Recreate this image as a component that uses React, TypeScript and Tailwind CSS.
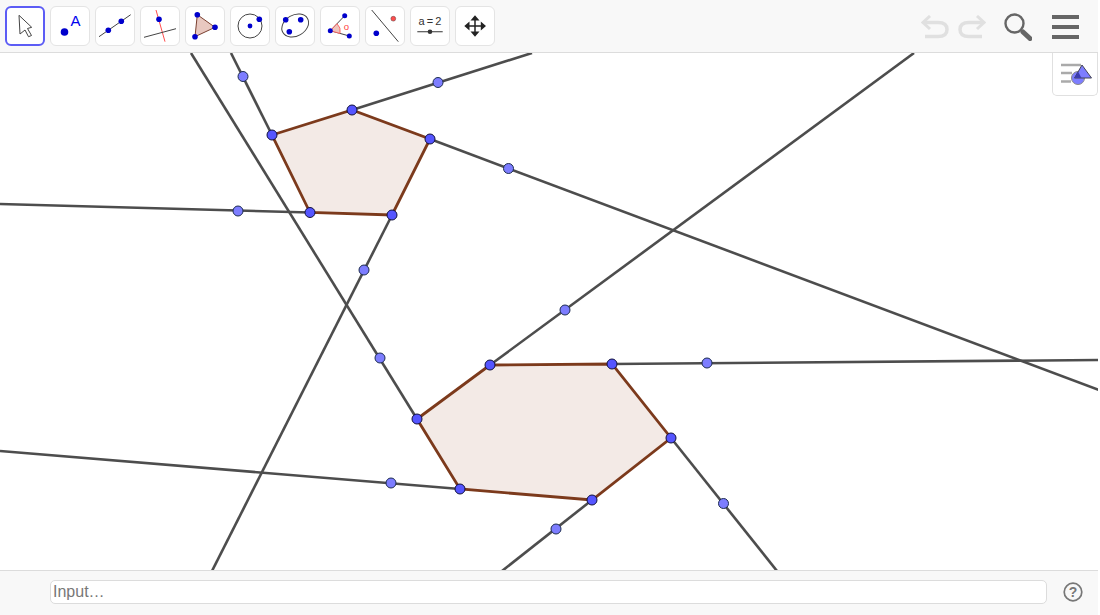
const FONT = "font-['Liberation_Sans',Arial,sans-serif]"

const lines = [
  'M191 53 L417 419',
  'M231 53 L272 135',
  'M352 110 L532 53',
  'M430 139 L1099 390',
  'M0 204 L310 212.5',
  'M392 215 L212 571',
  'M490 365 L914 53',
  'M612 364 L1099 360',
  'M671 438 L777 571',
  'M592 500 L502 571',
  'M0 451 L460 489',
]

const polygons = [
  '272,135 352,110 430,139 392,215 310,212.5',
  '417,419 490,365 612,364 671,438 592,500 460,489',
]

const vertices = [
  [272, 135], [352, 110], [430, 139], [392, 215], [310, 212.5],
  [417, 419], [490, 365], [612, 364], [671, 438], [592, 500], [460, 489],
]

const linePoints = [
  [243, 76.5], [438, 82.5], [508.5, 168.5], [238, 211], [364, 270], [380, 358],
  [565, 310], [707, 363], [723.5, 503.5], [556, 529], [391, 483],
]

function Tool({ active, children }: { active?: boolean; children: React.ReactNode }) {
  return (
    <div
      className={
        active
          ? 'h-10 w-10 rounded-[6px] border-2 border-[#5c5cf5] bg-white'
          : 'h-10 w-10 rounded-[6px] border border-[#e4e4e4] bg-white'
      }
    >
      {active ? (
        <svg viewBox="0 0 36 36" className="h-9 w-9">
          {children}
        </svg>
      ) : (
        <svg viewBox="0 0 38 38" className="h-[38px] w-[38px]">
          {children}
        </svg>
      )}
    </div>
  )
}

const Dot = ({ x, y, r = 2.8, fill = '#0000cc' }: { x: number; y: number; r?: number; fill?: string }) => (
  <circle cx={x} cy={y} r={r} fill={fill} />
)

function Toolbar() {
  return (
    <div className="flex h-[53px] shrink-0 items-start justify-between border-b border-[#dcdcdc] bg-[#f8f8f8] pl-[5px] pt-[6px]">
      <div className="flex gap-[5px]">
        <Tool active>
          <path d="M12 7.3 L24.7 19.3 L20.5 20.5 L24.5 27.5 L21.5 28.7 L18 22 L13 26 Z" fill="#fff" stroke="#444" strokeWidth="1" strokeLinejoin="round" />
        </Tool>
        <Tool>
          <Dot x={13.5} y={25} r={3.8} />
          <text x={19.5} y={18.7} fontSize="15" fill="#0000ee" fontFamily="Liberation Sans">A</text>
        </Tool>
        <Tool>
          <path d="M3 29.7 L34.7 7.7" stroke="#444" strokeWidth="1" />
          <Dot x={12.3} y={23.3} />
          <Dot x={25.3} y={14.3} />
        </Tool>
        <Tool>
          <path d="M15 3 L24 34.7" stroke="#ff4d4d" strokeWidth="1" />
          <path d="M3 30.3 L35 21.7" stroke="#444" strokeWidth="1" />
          <Dot x={18} y={12.3} />
        </Tool>
        <Tool>
          <path d="M11.3 7.7 L29 20.3 L9 29.7 Z" fill="#e8c8c0" stroke="#7a4030" strokeWidth="1" />
          <Dot x={11.3} y={7.7} />
          <Dot x={29} y={20.3} />
          <Dot x={9} y={29.7} />
        </Tool>
        <Tool>
          <circle cx={19} cy={19} r={12} fill="none" stroke="#444" strokeWidth="1" />
          <Dot x={19} y={19} r={2.4} />
          <Dot x={28.3} y={12.3} />
        </Tool>
        <Tool>
          <ellipse cx={19.2} cy={18.5} rx={14.2} ry={10.5} fill="none" stroke="#444" strokeWidth="1" transform="rotate(-30 19.2 18.5)" />
          <Dot x={9.7} y={12.7} />
          <Dot x={24.7} y={12.7} />
          <Dot x={13.3} y={24.7} />
        </Tool>
        <Tool>
          <path d="M9.3 23.7 L23.7 8.7 M9.3 23.7 L28.3 29" stroke="#444" strokeWidth="1" fill="none" />
          <path d="M9.3 23.7 L16 16.7 A10 10 0 0 1 19 26.4 Z" fill="#eec4bc" stroke="#ff5050" strokeWidth="0.8" />
          <Dot x={9.3} y={23.7} r={2.5} />
          <Dot x={23.7} y={8.7} r={2.5} />
          <Dot x={28.3} y={29} r={2.5} />
          <text x={22.7} y={22.5} fontSize="9.5" fill="#ff4040" fontFamily="Liberation Sans">o</text>
        </Tool>
        <Tool>
          <path d="M5.7 3 L32.3 34.7" stroke="#444" strokeWidth="1" />
          <Dot x={10.3} y={26.3} />
          <circle cx={27.3} cy={11.7} r={2.4} fill="#ff4d4d" stroke="#553333" strokeWidth="0.5" />
        </Tool>
        <Tool>
          <text x={19} y={18} fontSize="11" textAnchor="middle" wordSpacing="-1" fill="#333" fontFamily="Liberation Sans">a = 2</text>
          <path d="M6.3 24.7 L31.7 24.7" stroke="#555" strokeWidth="1.2" />
          <Dot x={19} y={24.7} r={2.3} fill="#333" />
        </Tool>
        <Tool>
          <path d="M19 12 L19 26 M12 19 L26 19" stroke="#222" strokeWidth="1.5" />
          <path d="M19 8.3 L23.5 13.5 L14.5 13.5 Z M19 29.7 L23.5 24.5 L14.5 24.5 Z M8.3 19 L13.5 14.5 L13.5 23.5 Z M30 19 L24.8 14.5 L24.8 23.5 Z" fill="#222" />
        </Tool>
      </div>
      <div className="mr-[19px] flex items-start">
        <svg viewBox="0 0 28 24" className="mt-[9px] h-6 w-7" fill="none" stroke="#e0e0e0" strokeWidth="3.5">
          <path d="M3 7.5 L17 7.5 Q26 7.5 26 14.5 Q26 21.5 17 21.5 L4 21.5" />
          <path d="M9 1 L2 7.5 L9 14" strokeWidth="3" />
        </svg>
        <svg viewBox="0 0 28 24" className="mt-[9px] ml-[9px] h-6 w-7" fill="none" stroke="#e0e0e0" strokeWidth="3.5">
          <path d="M25 7.5 L11 7.5 Q2 7.5 2 14.5 Q2 21.5 11 21.5 L24 21.5" />
          <path d="M19 1 L26 7.5 L19 14" strokeWidth="3" />
        </svg>
        <svg viewBox="0 0 28 28" className="mt-[7px] ml-[18px] h-7 w-7" fill="none" stroke="#666">
          <circle cx="10.5" cy="10.5" r="9" strokeWidth="2.4" />
          <path d="M19 19 L26 25.5" strokeWidth="5" strokeLinecap="round" />
        </svg>
        <div className="mt-[9px] ml-[20px] flex w-[27px] flex-col gap-[6px]">
          <div className="h-1 bg-[#666]" />
          <div className="h-1 bg-[#666]" />
          <div className="h-1 bg-[#666]" />
        </div>
      </div>
    </div>
  )
}

function Board() {
  return (
    <div className="relative min-h-0 flex-1 bg-white">
      <svg viewBox="0 53 1098 517" className="block h-full w-full">
        {polygons.map((p) => (
          <polygon key={p} points={p} fill="#f3eae6" />
        ))}
        {lines.map((d) => (
          <path key={d} d={d} stroke="#4d4d4d" strokeWidth="2.6" fill="none" />
        ))}
        {polygons.map((p) => (
          <polygon key={p} points={p} fill="none" stroke="#7c3a1c" strokeWidth="2.8" />
        ))}
        {linePoints.map(([x, y]) => (
          <circle key={`${x}-${y}`} cx={x} cy={y} r={5} fill="#7d7dff" stroke="#1c2c50" strokeWidth="1" />
        ))}
        {vertices.map(([x, y]) => (
          <circle key={`${x}-${y}`} cx={x} cy={y} r={5} fill="#5555ff" stroke="#10103c" strokeWidth="1" />
        ))}
      </svg>
      <div className="absolute right-0 top-0 flex h-[43px] w-[46px] items-center justify-center rounded-b-[5px] border-x border-b border-[#e0e0e0] bg-white pl-[2px]">
        <svg viewBox="0 0 32 24" className="h-6 w-8 shrink-0">
          <path d="M1 3 L21 3 M1 11 L12 11 M1 19.5 L11 19.5" stroke="#aaa" strokeWidth="2.4" />
          <circle cx="18" cy="16" r="6.5" fill="#7d7dff" stroke="#888" strokeWidth="1" />
          <path d="M22 3 L31.5 16 L14.5 16 Z" fill="#7d7dff" stroke="#445" strokeWidth="1" />
          <path d="M18 9.5 L21.5 16 L14.5 16 Z" fill="#3c3cb0" />
        </svg>
      </div>
    </div>
  )
}

function InputBar() {
  return (
    <div className="flex h-[45px] shrink-0 items-start border-t border-[#dcdcdc] bg-[#f8f8f8] pl-[50px] pr-[15px] pt-[9px]">
      <div className="flex h-6 flex-1 items-center rounded-[5px] border border-[#dcdcdc] bg-white pl-[2px] text-[16px] text-[#777]">
        Input…
      </div>
      <svg viewBox="0 0 20 20" className="ml-[16px] mt-[2px] h-5 w-5 shrink-0" fill="none">
        <circle cx="10" cy="10" r="8.8" stroke="#777" strokeWidth="1.7" />
        <text x="10" y="15" textAnchor="middle" fontSize="14" fontWeight="700" fill="#777" fontFamily="Liberation Sans">?</text>
      </svg>
    </div>
  )
}

export default function App() {
  return (
    <div className="h-[615px] w-[1100px] overflow-hidden bg-white">
      <div className={`flex h-[615px] w-[1098px] flex-col overflow-hidden bg-white ${FONT}`}>
        <Toolbar />
        <Board />
        <InputBar />
      </div>
    </div>
  )
}
